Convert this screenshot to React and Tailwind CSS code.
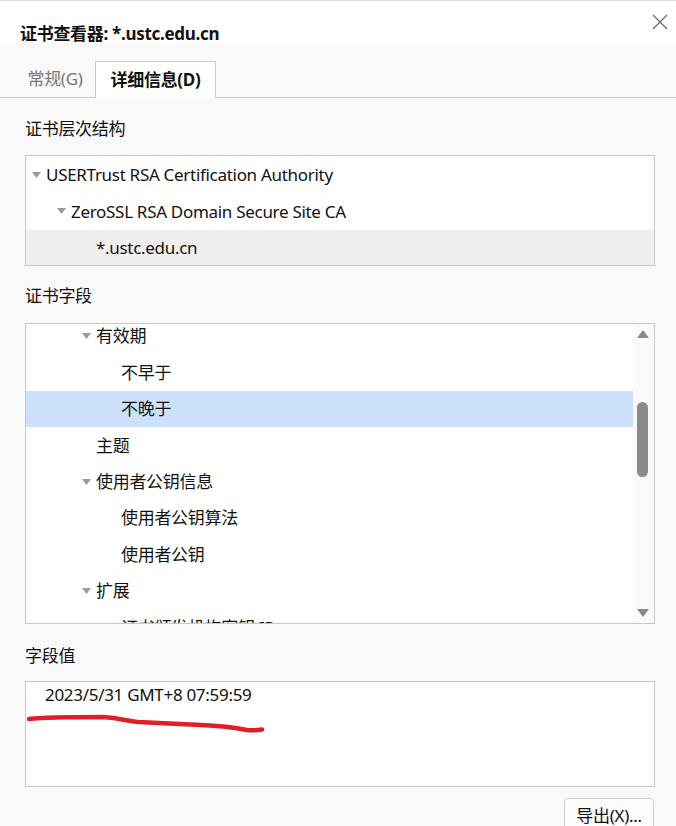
import React from "react";

const font = { fontFamily: '"Noto Sans", "Noto Sans CJK SC", sans-serif' };

const Tri = () => (
  <svg width="9" height="6" viewBox="0 0 9 6" className="shrink-0">
    <path d="M0 0 L9 0 L4.5 6 Z" fill="#9a9a9a" />
  </svg>
);

const TreeRow = ({ level, open, label, selected, gray }) => (
  <div
    className={`relative h-[36.4px] flex items-center ${
      selected ? "bg-[#cce1f9]" : gray ? "bg-[#efefef]" : ""
    }`}
  >
    {open && (
      <div className="absolute top-[15px]" style={{ left: 6 + level * 25 }}>
        <Tri />
      </div>
    )}
    <span className="whitespace-nowrap" style={{ paddingLeft: 20 + level * 25 }}>
      {label}
    </span>
  </div>
);

const hierarchy = [
  { level: 0, open: true, label: "USERTrust RSA Certification Authority" },
  { level: 1, open: true, label: "ZeroSSL RSA Domain Secure Site CA" },
  { level: 2, label: "*.ustc.edu.cn", gray: true },
];

const fields = [
  { level: 2, open: true, label: "有效期" },
  { level: 3, label: "不早于" },
  { level: 3, label: "不晚于", selected: true },
  { level: 2, label: "主题" },
  { level: 2, open: true, label: "使用者公钥信息" },
  { level: 3, label: "使用者公钥算法" },
  { level: 3, label: "使用者公钥" },
  { level: 2, open: true, label: "扩展" },
  { level: 3, label: "证书颁发机构密钥 ID" },
];

export default function App() {
  return (
    <div
      className="w-[676px] h-[826px] overflow-hidden bg-[#f9f9f9] text-[17px] tracking-[-0.3px] text-[#111]"
      style={font}
    >
      {/* title bar */}
      <div className="h-[43px] bg-white border-t border-[#dcdcdc] flex items-end justify-between relative">
        <h1 className="pl-[20px] -mb-[1px] font-bold text-[17px] leading-[20px]">
          证书查看器: *.ustc.edu.cn
        </h1>
        <svg className="absolute right-[8px] top-[13px]" width="16" height="16" viewBox="0 0 16 16">
          <path d="M1 1 L15 15 M15 1 L1 15" stroke="#6b6b6b" strokeWidth="1.3" />
        </svg>
      </div>

      {/* tabs */}
      <div className="h-[55px] flex items-end border-b border-[#c9c9c9] pl-[15px]">
        <div className="h-[36px] w-[80px] flex items-center justify-center text-[#777]">
          常规(G)
        </div>
        <div className="h-[37px] w-[121px] -mb-[1px] bg-white border border-b-0 border-[#c9c9c9] flex items-center justify-center font-bold">
          详细信息(D)
        </div>
      </div>

      <div className="px-[25px]">
        <div className="h-[57px] flex items-center pt-[4px]">证书层次结构</div>
        <div className="w-[630px] h-[111px] bg-white border border-[#c8c8c8] pt-[1px] overflow-hidden">
          {hierarchy.map((r) => (
            <TreeRow key={r.label} {...r} />
          ))}
        </div>

        <div className="h-[57px] flex items-center pt-[2px]">证书字段</div>
        <div className="w-[630px] h-[301px] bg-white border border-[#c8c8c8] flex overflow-hidden">
          <div className="flex-1 -mt-[6px]">
            {fields.map((r) => (
              <TreeRow key={r.label} {...r} />
            ))}
          </div>
          <div className="w-[21px] bg-[#fafafa] relative">
            <svg className="absolute left-[4px] top-[6px]" width="12" height="8" viewBox="0 0 12 8">
              <path d="M0 8 L6 0 L12 8 Z" fill="#8a8a8a" />
            </svg>
            <div className="absolute left-[4px] top-[78px] w-[11px] h-[75px] rounded-full bg-[#8a8a8a]" />
            <svg className="absolute left-[4px] bottom-[6px]" width="12" height="8" viewBox="0 0 12 8">
              <path d="M0 0 L12 0 L6 8 Z" fill="#8a8a8a" />
            </svg>
          </div>
        </div>

        <div className="h-[57px] flex items-center pt-[6px]">字段值</div>
        <div className="relative w-[630px] h-[106px] bg-white border border-[#c8c8c8] pl-[19px] pt-[1px]">
          <div className="leading-[24px]">2023/5/31 GMT+8 07:59:59</div>
          <svg className="absolute -left-[25px] -top-[681px] pointer-events-none" width="676" height="826">
            <path
              d="M28 718 C 45 716, 80 716, 102 716 C 120 717, 125 720, 137 721 C 160 722, 180 723, 200 724 C 225 725, 236 727, 246 729 C 252 729.5, 258 729, 261 728.5"
              fill="none"
              stroke="#e01e24"
              strokeWidth="4.5"
              strokeLinecap="round"
            />
          </svg>
        </div>

        <div className="flex justify-end pt-[11px]">
          <button className="w-[90px] h-[36px] bg-[#fdfdfd] border border-[#cfcfcf] rounded-[4px] text-[17px] -mr-[3px]">
            导出(X)...
          </button>
        </div>
      </div>
    </div>
  );
}
